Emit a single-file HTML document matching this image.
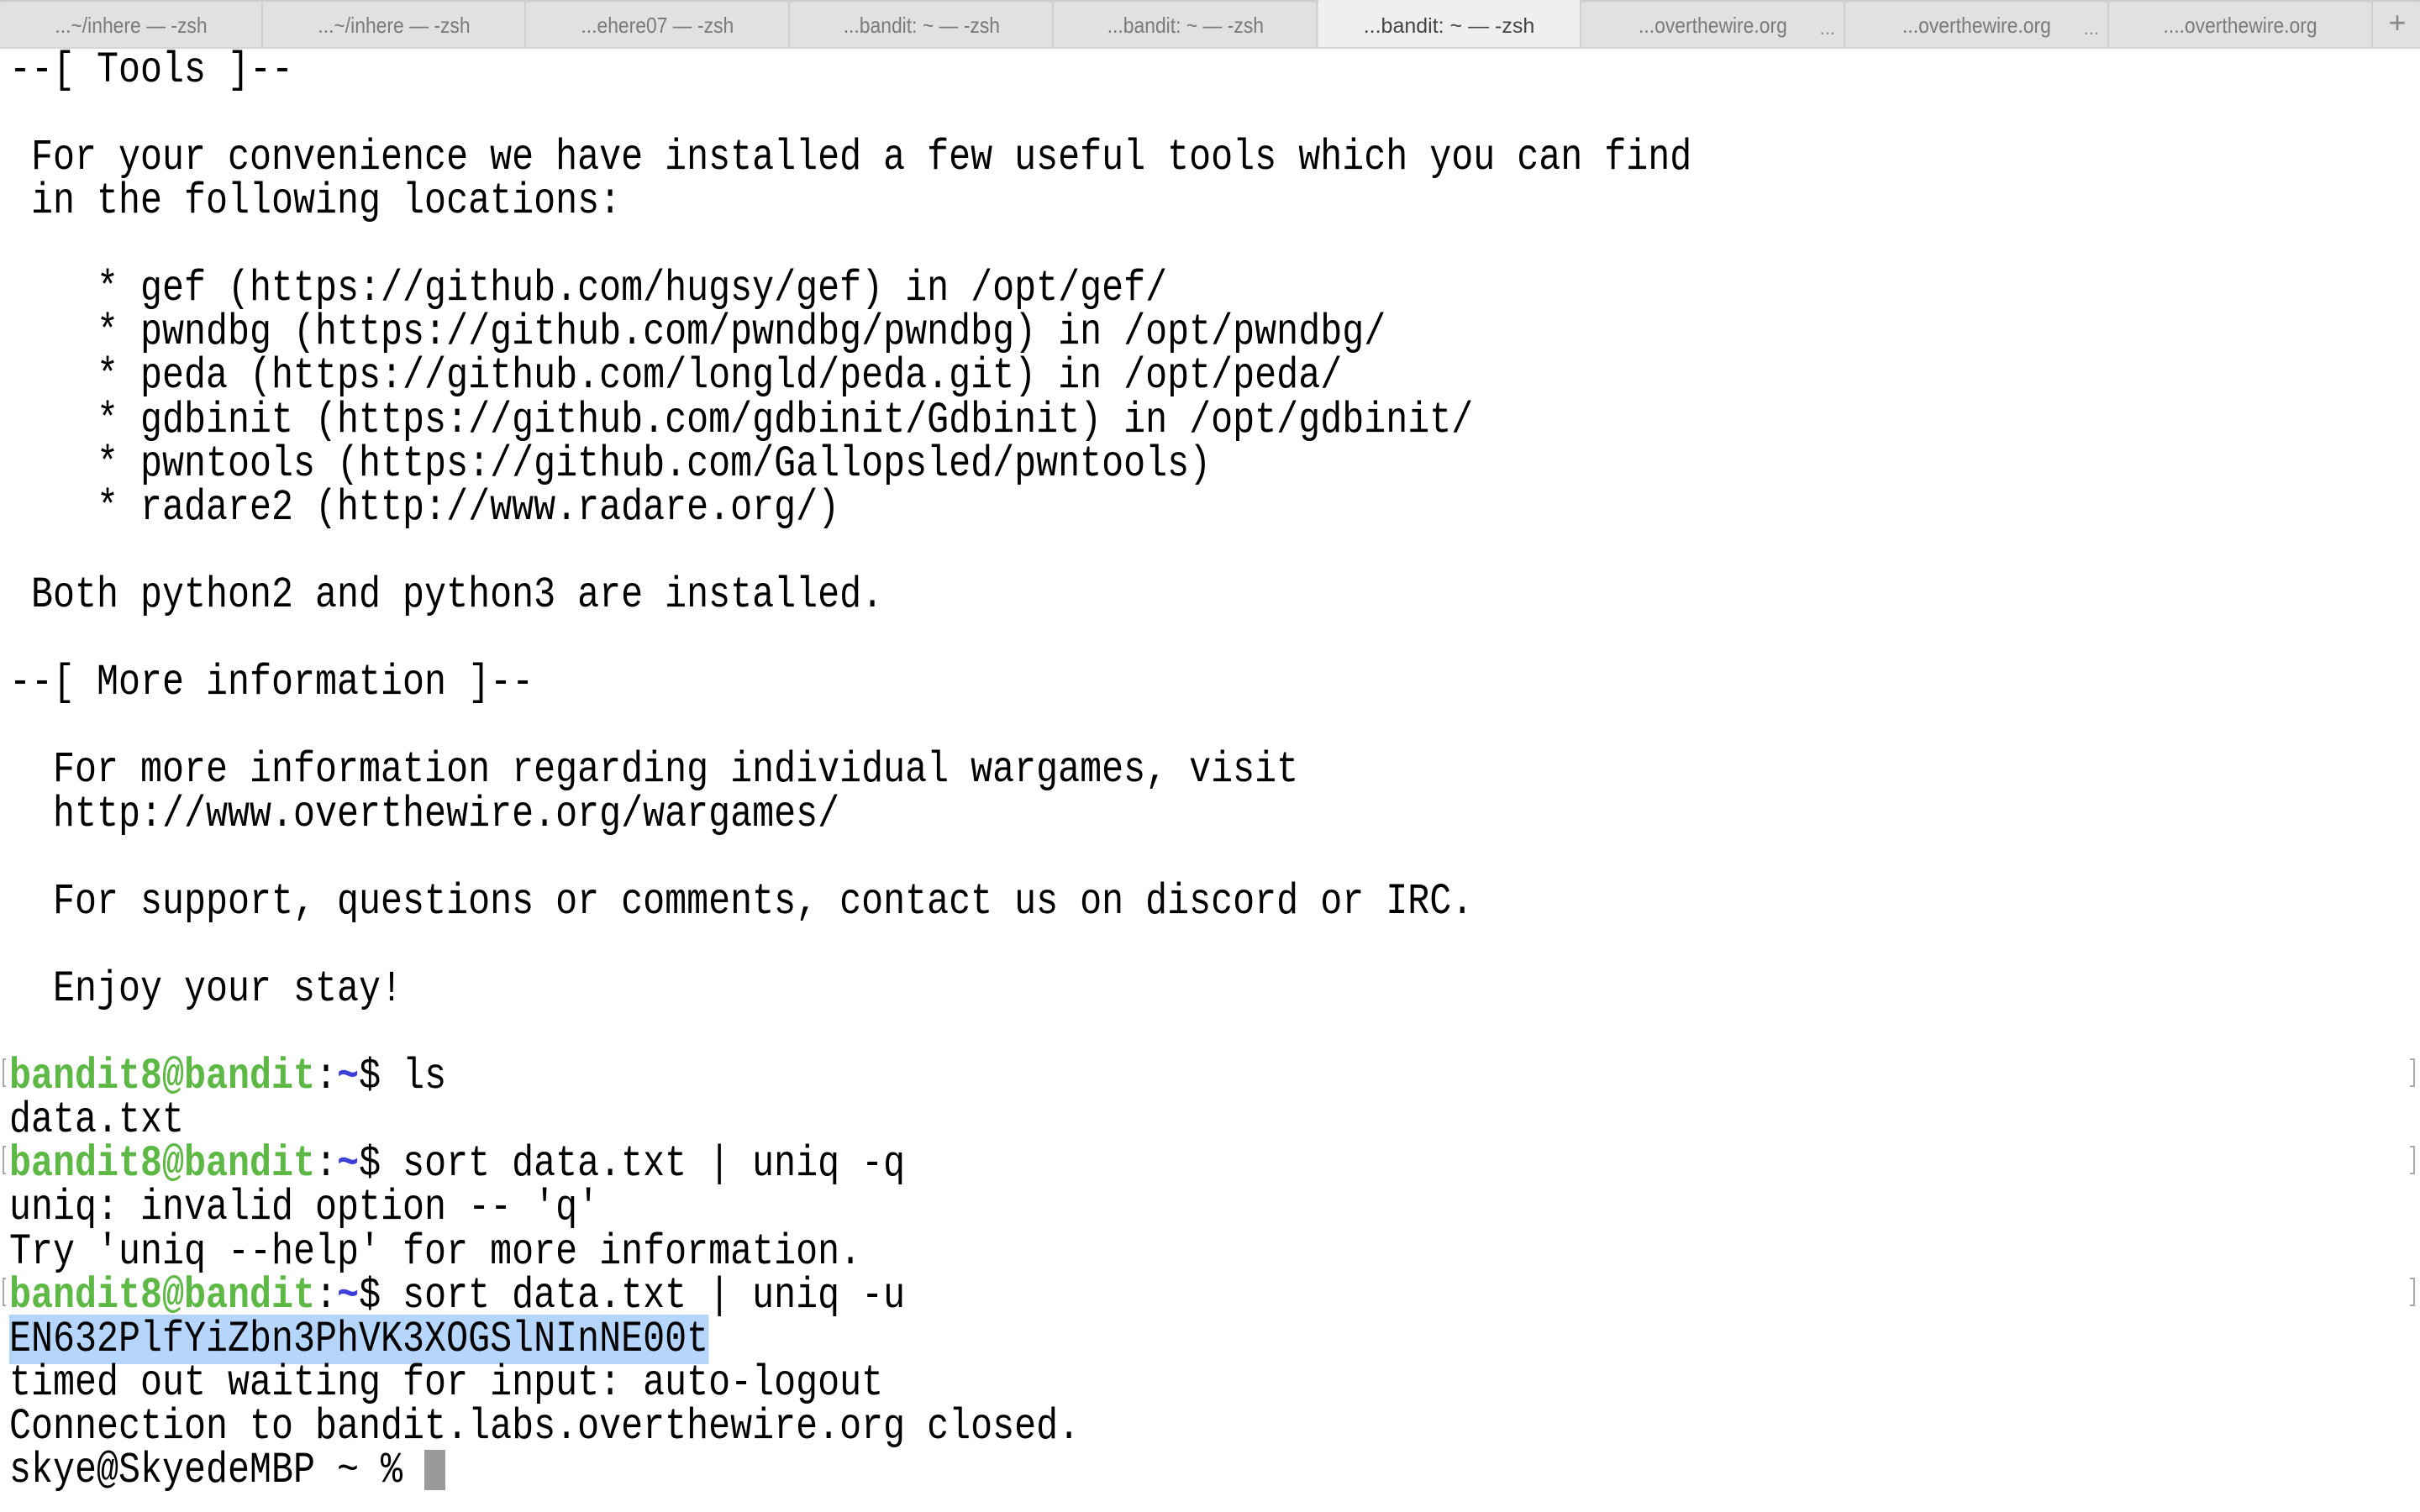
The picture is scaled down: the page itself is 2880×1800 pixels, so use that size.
<!DOCTYPE html>
<html><head><meta charset="utf-8"><style>
html,body{margin:0;padding:0;background:#fff;width:2880px;height:1800px;overflow:hidden}
.tabs{position:absolute;left:0;top:0;width:2880px;height:56px;background:#e2e1e1;border-bottom:2px solid #d6d5d5;box-shadow:inset 0 3px 3px -2px #bbb}
.tab{position:absolute;top:0;height:56px;width:313px;border-right:2px solid #d0cfcf;box-sizing:border-box;font-family:"Liberation Sans",sans-serif;font-size:26px;color:#7a7a7a;text-align:center;line-height:60px}
.tab span{display:inline-block;transform:scaleX(0.88)}
.tab.act{background:#f0efee;color:#444}
.tab.act span{transform:none;font-size:25px}
.dots{position:absolute;right:10px;top:4px;font-size:22px;color:#888}
.plus{position:absolute;left:2826px;top:0;width:54px;height:56px;text-align:center;line-height:54px;font-family:"Liberation Sans",sans-serif;font-size:36px;color:#888;font-weight:300}
.row{position:absolute;left:11px;height:52px;line-height:52px;font-family:"Liberation Mono",monospace;font-size:52px;white-space:pre;transform:scaleX(0.8333);transform-origin:0 50%;color:#000;margin-top:1px}
.g{color:#5db845;font-weight:bold}
.b{color:#3c3fd8;font-weight:bold}
.sel{background:#b6d5fb}
.lb{position:absolute;left:3px;width:4px;height:34px;border:2px solid #aaa;border-right:none;box-sizing:border-box}
.rb{position:absolute;left:2868px;width:6px;height:34px;border:2px solid #aaa;border-left:none;box-sizing:border-box}
.cur{position:absolute;left:505px;width:25px;height:48px;background:#9a9a9a}
</style></head><body>
<div class="tabs">
<div class="tab" style="left:0"><span>...~/inhere — -zsh</span></div>
<div class="tab" style="left:313px"><span>...~/inhere — -zsh</span></div>
<div class="tab" style="left:627px"><span>...ehere07 — -zsh</span></div>
<div class="tab" style="left:941px"><span>...bandit: ~ — -zsh</span></div>
<div class="tab" style="left:1255px"><span>...bandit: ~ — -zsh</span></div>
<div class="tab act" style="left:1569px"><span>...bandit: ~ — -zsh</span></div>
<div class="tab" style="left:1883px"><span>...overthewire.org</span><div class="dots">...</div></div>
<div class="tab" style="left:2197px"><span>...overthewire.org</span><div class="dots">...</div></div>
<div class="tab" style="left:2511px"><span>....overthewire.org</span></div>
<div class="plus">+</div>
</div>
<div class="row" style="top:57px">--[ Tools ]--</div>
<div class="row" style="top:161px"> For your convenience we have installed a few useful tools which you can find</div>
<div class="row" style="top:213px"> in the following locations:</div>
<div class="row" style="top:317px">    * gef (https://github.com/hugsy/gef) in /opt/gef/</div>
<div class="row" style="top:369px">    * pwndbg (https://github.com/pwndbg/pwndbg) in /opt/pwndbg/</div>
<div class="row" style="top:421px">    * peda (https://github.com/longld/peda.git) in /opt/peda/</div>
<div class="row" style="top:474px">    * gdbinit (https://github.com/gdbinit/Gdbinit) in /opt/gdbinit/</div>
<div class="row" style="top:526px">    * pwntools (https://github.com/Gallopsled/pwntools)</div>
<div class="row" style="top:578px">    * radare2 (http://www.radare.org/)</div>
<div class="row" style="top:682px"> Both python2 and python3 are installed.</div>
<div class="row" style="top:786px">--[ More information ]--</div>
<div class="row" style="top:890px">  For more information regarding individual wargames, visit</div>
<div class="row" style="top:943px">  http://www.overthewire.org/wargames/</div>
<div class="row" style="top:1047px">  For support, questions or comments, contact us on discord or IRC.</div>
<div class="row" style="top:1151px">  Enjoy your stay!</div>
<div class="row" style="top:1255px"><span class="g">bandit8@bandit</span>:<span class="b">~</span>$ ls</div>
<div class="row" style="top:1307px">data.txt</div>
<div class="row" style="top:1359px"><span class="g">bandit8@bandit</span>:<span class="b">~</span>$ sort data.txt | uniq -q</div>
<div class="row" style="top:1411px">uniq: invalid option -- 'q'</div>
<div class="row" style="top:1464px">Try 'uniq --help' for more information.</div>
<div class="row" style="top:1516px"><span class="g">bandit8@bandit</span>:<span class="b">~</span>$ sort data.txt | uniq -u</div>
<div class="row" style="top:1568px"><span class="sel">EN632PlfYiZbn3PhVK3XOGSlNInNE00t</span></div>
<div class="row" style="top:1620px">timed out waiting for input: auto-logout</div>
<div class="row" style="top:1672px">Connection to bandit.labs.overthewire.org closed.</div>
<div class="row" style="top:1724px">skye@SkyedeMBP ~ % </div>
<div class="cur" style="top:1726px"></div>
<div class="lb" style="top:1260px"></div><div class="rb" style="top:1260px"></div>
<div class="lb" style="top:1364px"></div><div class="rb" style="top:1364px"></div>
<div class="lb" style="top:1521px"></div><div class="rb" style="top:1521px"></div>
</body></html>
